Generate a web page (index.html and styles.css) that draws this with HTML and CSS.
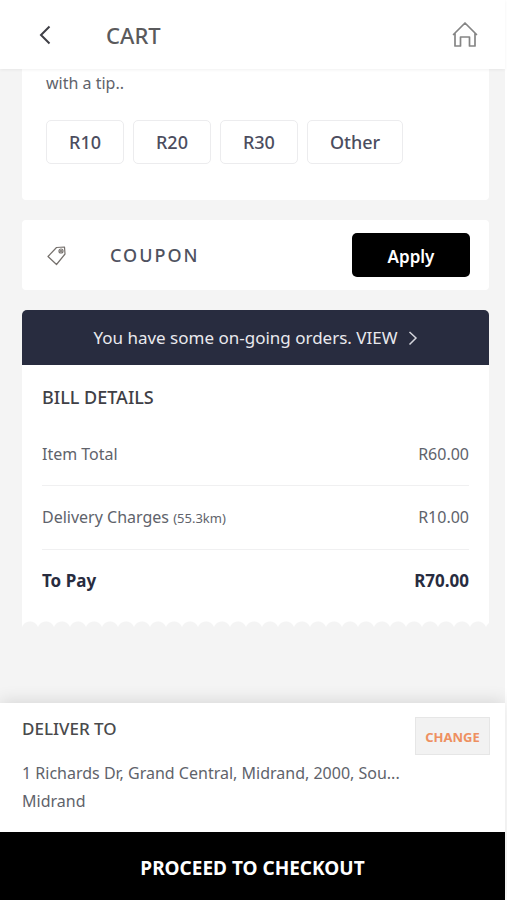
FILE: index.html
```html
<!DOCTYPE html>
<html lang="en">
<head>
<meta charset="utf-8">
<meta name="viewport" content="width=device-width, initial-scale=1">
<title>Cart</title>
<link rel="stylesheet" href="styles.css">
</head>
<body>
<div class="app">
  <header class="topbar">
    <button class="icon-button" type="button" aria-label="Back">
      <svg width="24" height="24" viewBox="0 0 24 24"><path d="M17.500 3.500 9 12 17.500 20.500" fill="none" stroke="#3f3f46" stroke-width="2"/></svg>
    </button>
    <h1 class="topbar-title">CART</h1>
    <a class="home-link" href="#" aria-label="Home">
      <svg width="26" height="28" viewBox="0 0 26 28"><path d="M1.500 13.500 13 2 24.500 13.500M3 12.500v12.500h5.500v-9h9v9H23V12.500" fill="none" stroke="#858585" stroke-width="1.700" stroke-linejoin="round" stroke-linecap="round"/></svg>
    </a>
  </header>

  <main class="content">
    <section class="card tip-card">
      <p class="tip-text">with a tip..</p>
      <div class="tip-options">
        <button class="tip" type="button">R10</button>
        <button class="tip" type="button">R20</button>
        <button class="tip" type="button">R30</button>
        <button class="tip" type="button">Other</button>
      </div>
    </section>

    <section class="card coupon">
      <svg class="coupon-icon" width="22" height="22" viewBox="0 0 22 22" fill="none" stroke="#75706c" stroke-width="1.200" stroke-linejoin="round"><path d="M2 12.500 10.500 3.500 18.500 3 19 10 10.500 20.500Z"/><circle cx="15" cy="7" r="2"/><circle cx="15" cy="7" r=".5"/></svg>
      <input class="coupon-input" type="text" placeholder="COUPON" aria-label="Coupon">
      <button class="apply" type="button">Apply</button>
    </section>

    <section class="bill">
      <a class="orders-link" href="#">
        <span>You have some on-going orders. VIEW</span>
        <svg width="10" height="16" viewBox="0 0 10 16"><path d="M1.500 2 8 8 1.500 14.500" fill="none" stroke="#d4d5dc" stroke-width="1.500"/></svg>
      </a>
      <div class="bill-body">
        <h2 class="bill-title">BILL DETAILS</h2>
        <dl class="bill-list">
          <div class="bill-row"><dt>Item Total</dt><dd>R60.00</dd></div>
          <div class="bill-row"><dt>Delivery Charges <span class="distance">(55.3km)</span></dt><dd>R10.00</dd></div>
          <div class="bill-row total"><dt>To Pay</dt><dd>R70.00</dd></div>
        </dl>
      </div>
      <div class="torn-edge"></div>
    </section>
  </main>

  <footer class="footer">
    <section class="deliver">
      <div class="deliver-head">
        <h2 class="deliver-title">DELIVER TO</h2>
        <button class="change" type="button">CHANGE</button>
      </div>
      <p class="address">1 Richards Dr, Grand Central, Midrand, 2000, Sou...<br>Midrand</p>
    </section>
    <button class="checkout" type="button">PROCEED TO CHECKOUT</button>
  </footer>
</div>
</body>
</html>
```
FILE: styles.css
```css
* {
  box-sizing: border-box;
}

body {
  margin: 0;
  padding-right: 2px;
  background: #fff;
  color: #60636b;
  font-family: "Noto Sans", "Open Sans", sans-serif;
  font-size: 16px;
  line-height: 28px;
}

h1, h2, p, dl, dd {
  margin: 0;
}

button, input {
  font: inherit;
  border: 0;
  padding: 0;
}

svg {
  display: block;
}

.app {
  display: flex;
  flex-direction: column;
  min-height: 100vh;
  background: #f4f4f4;
}

.topbar {
  position: relative;
  display: flex;
  align-items: center;
  height: 69px;
  padding: 0 27px 0 32px;
  background: #fff;
  box-shadow: 0 1px 3px rgba(0, 0, 0, 0.06);
}

.icon-button {
  width: 74px;
  background: none;
}

.topbar-title {
  flex: 1;
  color: #5a5a5c;
  font-size: 22px;
  font-weight: 500;
}

.content {
  flex: 1;
  display: flex;
  flex-direction: column;
  gap: 20px;
  padding: 0 16px 0 22px;
}

.card {
  background: #fff;
  border-radius: 4px;
}

.tip-card {
  padding: 0 24px 36px;
  border-radius: 0 0 4px 4px;
}

.tip-text {
  margin-bottom: 23px;
}

.tip-options {
  display: flex;
  gap: 9px;
}

.tip {
  height: 44px;
  padding: 0 22px;
  border: 1px solid #ececee;
  border-radius: 5px;
  background: #fff;
  color: #4b4d5e;
  font-size: 18px;
  font-weight: 500;
}

.coupon {
  display: flex;
  align-items: center;
  height: 70px;
  padding: 0 19px 0 24px;
}

.coupon-icon {
  flex: none;
}

.coupon-input {
  flex: 1;
  min-width: 0;
  margin-left: 42px;
  background: none;
  font-size: 18px;
  font-weight: 500;
  letter-spacing: 2px;
}

.coupon-input::placeholder {
  color: #4f5260;
  opacity: 1;
}

.apply {
  width: 118px;
  height: 44px;
  padding-top: 3px;
  border-radius: 5px;
  background: #000;
  color: #fff;
  font-size: 17px;
  font-weight: 600;
}

.orders-link {
  display: flex;
  align-items: center;
  justify-content: center;
  gap: 10px;
  height: 55px;
  border-radius: 5px 5px 0 0;
  background: #282c3f;
  color: #e9e9ee;
  font-size: 17px;
  text-decoration: none;
}

.bill-body {
  padding: 18px 20px 26px;
  background: #fff;
}

.bill-title {
  margin-bottom: 12px;
  color: #3f4046;
  font-size: 18px;
  font-weight: 500;
}

.bill-row {
  display: flex;
  justify-content: space-between;
  padding: 17px 0;
  border-bottom: 1px solid #f0f0f1;
}

.total {
  padding-bottom: 0;
  border: 0;
  color: #282c3f;
  font-size: 17px;
  font-weight: 700;
}

.distance {
  font-size: 13px;
}

.torn-edge {
  height: 8px;
  background: radial-gradient(circle at 50% 9px, #f4f4f4 8px, #fff 9px) 0 0 / 16px 8px repeat-x;
}

.footer {
  position: relative;
  background: #fff;
  box-shadow: 0 -2px 16px rgba(0, 0, 0, 0.12);
}

.deliver {
  padding: 14px 15px 17px 22px;
}

.deliver-head {
  display: flex;
  justify-content: space-between;
  align-items: flex-start;
  height: 42px;
}

.deliver-title {
  color: #4a4a4c;
  font-size: 17px;
  font-weight: 500;
  line-height: 24px;
}

.change {
  width: 75px;
  height: 38px;
  padding-top: 2px;
  border: 1px solid #e6e6e6;
  background: #f2f2f2;
  color: #ee9061;
  font-size: 13px;
  font-weight: 700;
}

.checkout {
  display: block;
  width: 100%;
  height: 68px;
  padding-top: 3px;
  background: #000;
  color: #fff;
  font-size: 19px;
  font-weight: 700;
}
```
